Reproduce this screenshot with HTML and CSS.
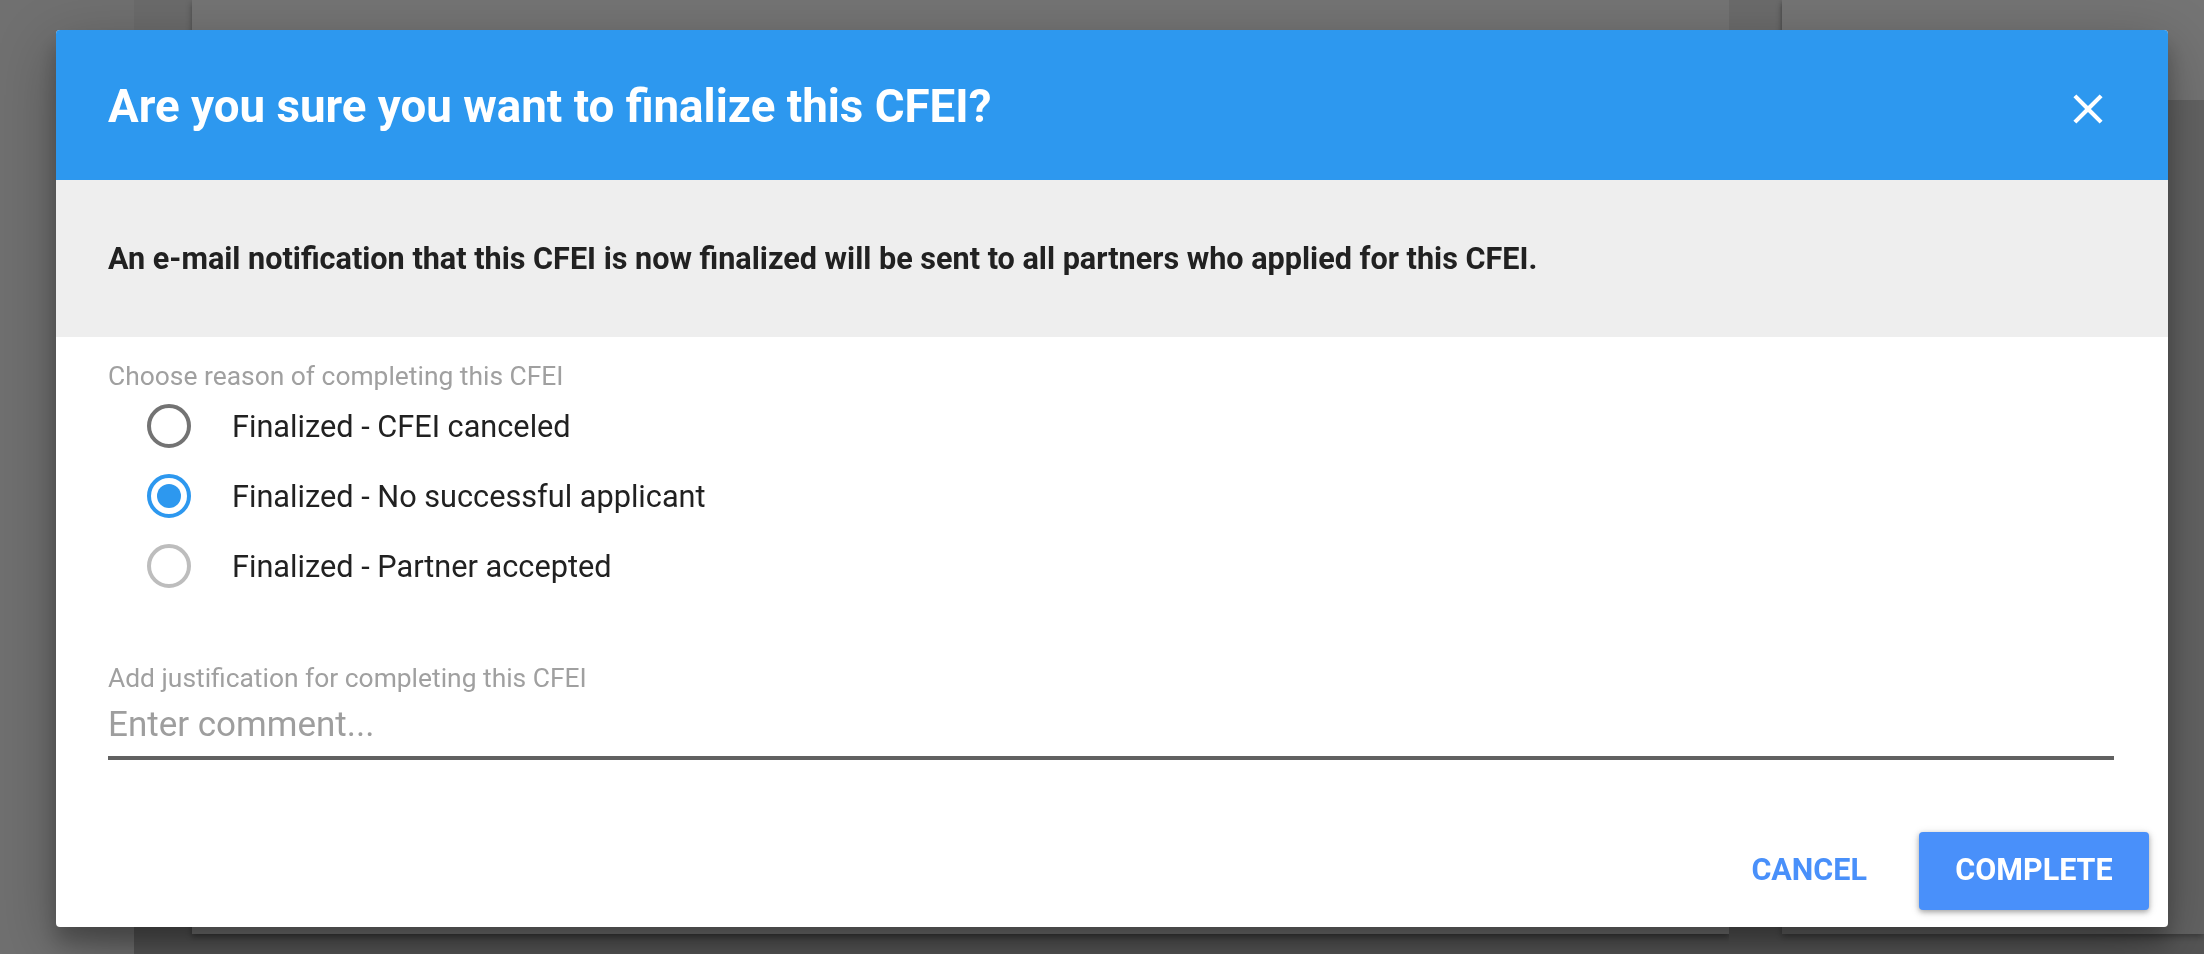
FILE: index.html
```html
<!DOCTYPE html>
<html lang="en">
<head>
<meta charset="utf-8">
<title>Finalize CFEI</title>
<link rel="stylesheet" href="styles.css">
</head>
<body>
<div class="page">
  <aside class="side"></aside>
  <div class="gutter"></div>
  <main class="card"></main>
  <div class="gutter gutter-right"></div>
  <section class="panel">
    <div class="panel-head"></div>
    <div class="panel-body"></div>
  </section>
</div>

<div class="overlay">
  <div class="dialog" role="dialog" aria-labelledby="dlg-title">
    <header class="dlg-head">
      <h1 class="dlg-title" id="dlg-title">Are you sure you want to finalize this CFEI?</h1>
      <button class="close" aria-label="Close">
        <svg viewBox="0 0 24 24" width="50" height="50" aria-hidden="true"><path fill="#fff" d="M19 6.41L17.59 5 12 10.59 6.41 5 5 6.41 10.59 12 5 17.59 6.41 19 12 13.41 17.59 19 19 17.59 13.41 12z"/></svg>
      </button>
    </header>
    <div class="dlg-note">
      <p class="note-text">An e-mail notification that this CFEI is now finalized will be sent to all partners who applied for this CFEI.</p>
    </div>
    <div class="dlg-form">
      <div class="field-label">Choose reason of completing this CFEI</div>
      <div class="radios">
        <label class="radio"><span class="ring ring-dark"></span><span class="radio-text">Finalized - CFEI canceled</span></label>
        <label class="radio"><span class="ring ring-on"><span class="ring-dot"></span></span><span class="radio-text">Finalized - No successful applicant</span></label>
        <label class="radio"><span class="ring ring-light"></span><span class="radio-text">Finalized - Partner accepted</span></label>
      </div>
      <div class="field-label field-label-gap">Add justification for completing this CFEI</div>
      <input class="comment" type="text" placeholder="Enter comment...">
    </div>
    <div class="actions">
      <button class="btn-flat">CANCEL</button>
      <button class="btn-raised">COMPLETE</button>
    </div>
  </div>
</div>
</body>
</html>
```
FILE: styles.css
```css
* { box-sizing: border-box; }

html, body {
  margin: 0;
  padding: 0;
  width: 2204px;
  height: 954px;
  overflow: hidden;
  background: #555555;
  font-family: Roboto, "Liberation Sans", Arial, sans-serif;
}

/* dimmed page beneath the modal */
.page {
  display: flex;
  height: 954px;
}
.side {
  width: 134px;
  background: #707070;
}
.gutter {
  width: 58px;
  background: linear-gradient(#6b6b6b 0, #6b6b6b 50%, #555555 50%, #555555 100%);
}
.gutter-right { width: 53px; }
.card {
  width: 1537px;
  height: 934px;
  background: #747474;
  box-shadow: 0 3px 6px rgba(0, 0, 0, 0.35);
}
.panel {
  flex: 1;
  height: 934px;
  display: flex;
  flex-direction: column;
  box-shadow: 0 3px 6px rgba(0, 0, 0, 0.3);
}
.panel-head {
  height: 100px;
  background: #747474;
  box-shadow: 0 3px 4px rgba(0, 0, 0, 0.2);
}
.panel-body {
  flex: 1;
  background: #636363;
}

/* modal */
.overlay {
  position: fixed;
  inset: 0;
  padding: 30px 36px 0 56px;
}
.dialog {
  width: 100%;
  background: #ffffff;
  border-radius: 4px;
  overflow: hidden;
  box-shadow: 0 19px 60px rgba(0, 0, 0, 0.3), 0 15px 20px rgba(0, 0, 0, 0.22);
}

.dlg-head {
  height: 150px;
  background: #2d98ef;
  display: flex;
  align-items: center;
  justify-content: space-between;
  padding: 0 55px 0 52px;
}
.dlg-title {
  margin: 0;
  color: #ffffff;
  font-size: 45.7px;
  font-weight: 700;
  line-height: 46px;
  padding-top: 4px;
}
.close {
  border: 0;
  background: transparent;
  padding: 0;
  width: 50px;
  height: 50px;
  margin-top: 7px;
  cursor: pointer;
}
.close svg { display: block; }

.dlg-note {
  height: 157px;
  background: #eeeeee;
  display: flex;
  align-items: center;
  padding: 0 52px;
}
.note-text {
  margin: 0;
  color: #212121;
  font-size: 30.6px;
  font-weight: 700;
  line-height: 34px;
}

.dlg-form {
  padding: 25px 54px 0 52px;
}
.field-label {
  color: #a0a0a0;
  font-size: 26.4px;
  line-height: 29px;
}
.field-label-gap { margin-top: 63px; }

.radios {
  display: flex;
  flex-direction: column;
}
.radio {
  height: 70px;
  display: flex;
  align-items: center;
  padding-left: 39px;
  gap: 41px;
}
.ring {
  width: 44px;
  height: 44px;
  border-radius: 50%;
  border: 4px solid #737373;
  display: flex;
  align-items: center;
  justify-content: center;
  flex: none;
}
.ring-on { border-color: #2d98ef; }
.ring-light { border-color: #bdbdbd; }
.ring-dot {
  width: 24px;
  height: 24px;
  border-radius: 50%;
  background: #2d98ef;
}
.radio-text {
  color: #212121;
  font-size: 30.7px;
}

.comment {
  display: block;
  width: 100%;
  margin: 7px 0 0;
  padding: 2px 0 10px;
  height: 60px;
  border: 0;
  border-bottom: 4px solid #616161;
  outline: none;
  background: transparent;
  font-family: Roboto, "Liberation Sans", Arial, sans-serif;
  font-size: 35px;
  line-height: 44px;
  color: #212121;
}
.comment::placeholder { color: #9e9e9e; }

.actions {
  display: flex;
  justify-content: flex-end;
  align-items: center;
  gap: 20px;
  margin-top: 72px;
  padding: 0 19px 17px 0;
}
.btn-flat, .btn-raised {
  height: 78px;
  border: 0;
  border-radius: 4px;
  font-family: Roboto, "Liberation Sans", Arial, sans-serif;
  font-size: 30.5px;
  font-weight: 700;
  padding-bottom: 4px;
  cursor: pointer;
}
.btn-flat {
  background: transparent;
  color: #4990fa;
  padding-left: 32px;
  padding-right: 32px;
}
.btn-raised {
  background: #4990fa;
  color: #ffffff;
  padding-left: 36px;
  padding-right: 36px;
  min-width: 230px;
  box-shadow: 0 2px 5px rgba(0, 0, 0, 0.26), 0 2px 10px rgba(0, 0, 0, 0.16);
}
```
